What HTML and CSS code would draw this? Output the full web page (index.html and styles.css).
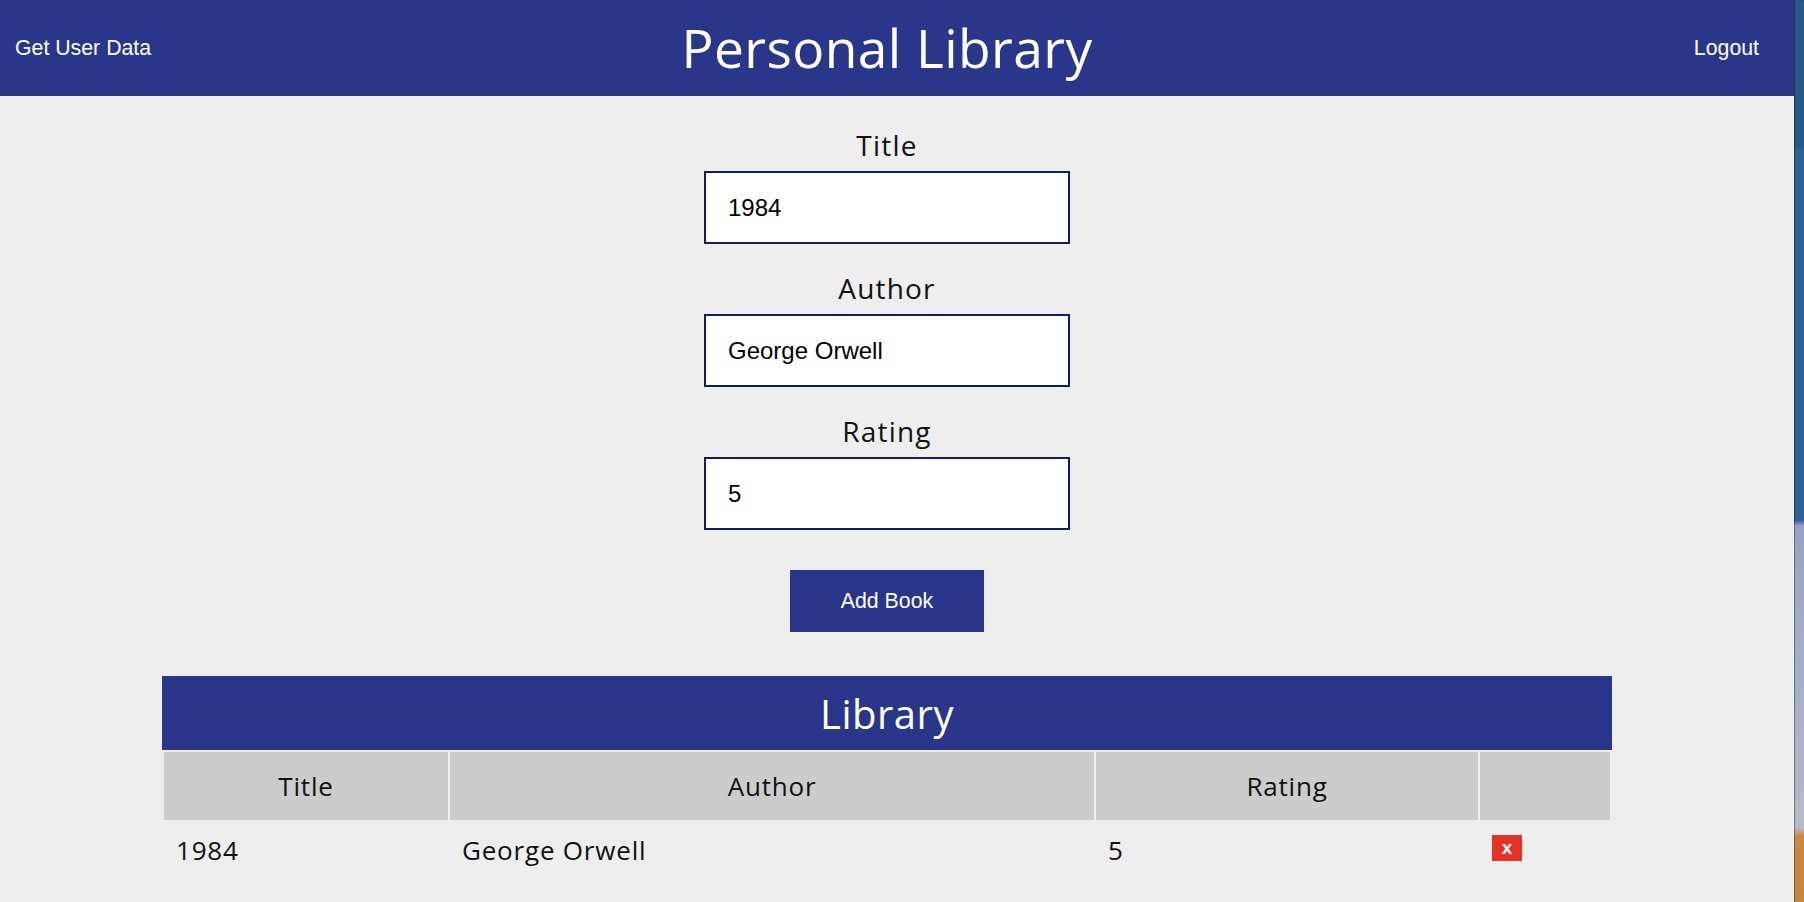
FILE: index.html
```html
<!DOCTYPE html>
<html lang="en">
<head>
<meta charset="utf-8">
<title>Personal Library</title>
<link rel="stylesheet" href="styles.css">
</head>
<body>
<div class="screen">
  <div class="app">
    <header class="topbar">
      <div class="topbar-side"><a class="toplink" href="#">Get User Data</a></div>
      <h1 class="brand">Personal Library</h1>
      <div class="topbar-side topbar-right"><a class="toplink" href="#">Logout</a></div>
    </header>
    <main class="main">
      <form class="book-form">
        <label class="field">
          <span class="field-label">Title</span>
          <input class="field-input" type="text" value="1984">
        </label>
        <label class="field">
          <span class="field-label">Author</span>
          <input class="field-input" type="text" value="George Orwell">
        </label>
        <label class="field">
          <span class="field-label">Rating</span>
          <input class="field-input" type="text" value="5">
        </label>
        <button class="add-btn" type="button">Add Book</button>
      </form>
      <div class="library">
        <div class="library-caption">Library</div>
        <table class="library-table">
          <colgroup>
            <col class="c-title"><col class="c-author"><col class="c-rating"><col class="c-del">
          </colgroup>
          <thead>
            <tr><th>Title</th><th>Author</th><th>Rating</th><th></th></tr>
          </thead>
          <tbody>
            <tr>
              <td>1984</td>
              <td>George Orwell</td>
              <td>5</td>
              <td><button class="del-btn" type="button">x</button></td>
            </tr>
          </tbody>
        </table>
      </div>
    </main>
  </div>
  <div class="desktop"></div>
</div>
</body>
</html>
```
FILE: styles.css
```css
html, body {
  margin: 0;
  padding: 0;
  height: 902px;
  overflow: hidden;
}
body {
  font-family: "Open Sans", "Liberation Sans", sans-serif;
  color: #111;
  background: #eeeeee;
}
.screen {
  display: flex;
  height: 902px;
}
.app {
  flex: 0 0 1794px;
  background: #eeeeee;
  display: flex;
  flex-direction: column;
}
.desktop {
  flex: 1 1 auto;
  box-shadow: inset 1px 0 1px rgba(0,0,0,0.35);
  background: linear-gradient(to bottom,
    #2b5784 0px, #2b5784 146px,
    #2f6292 150px, #2f6292 520px,
    #98a3c6 526px, #b6bbcb 828px,
    #c78a45 836px, #c48845 902px);
}
.topbar {
  height: 96px;
  background: #2a368a;
  display: flex;
  align-items: center;
  padding: 0 35px 0 15px;
  box-sizing: border-box;
}
.topbar-side {
  flex: 1 1 0;
}
.topbar-right {
  text-align: right;
}
.toplink {
  font-family: "Liberation Sans", Arial, sans-serif;
  font-size: 21.3px;
  color: #ffffff;
  text-decoration: none;
}
.brand {
  margin: 0;
  font-family: "Open Sans", sans-serif;
  font-weight: 400;
  font-size: 53.3px;
  line-height: 60px;
  color: #ffffff;
  letter-spacing: 0.4px;
}
.main {
  padding: 32px 20px 0 0;
  display: flex;
  flex-direction: column;
  align-items: center;
}
.book-form {
  display: flex;
  flex-direction: column;
  align-items: center;
}
.field {
  display: flex;
  flex-direction: column;
  align-items: center;
  margin-bottom: 27px;
}
.field-label {
  font-size: 28px;
  line-height: 34px;
  letter-spacing: 1.2px;
  margin-bottom: 9px;
  color: #111;
}
.field-input {
  width: 366px;
  height: 73px;
  box-sizing: border-box;
  border: 2px solid #111d62;
  border-radius: 0;
  background: #ffffff;
  padding: 0 0 0 22px;
  margin: 0;
  font-family: "Liberation Sans", Arial, sans-serif;
  font-size: 24px;
  color: #000;
  outline: none;
}
.add-btn {
  margin-top: 13px;
  width: 194px;
  height: 62px;
  border: none;
  border-radius: 0;
  background: #2a368a;
  color: #ffffff;
  font-family: "Liberation Sans", Arial, sans-serif;
  font-size: 21.3px;
  cursor: pointer;
}
.library {
  margin-top: 44px;
  width: 1450px;
}
.library-caption {
  height: 74px;
  background: #2a368a;
  color: #ffffff;
  font-size: 40px;
  display: flex;
  align-items: center;
  justify-content: center;
  letter-spacing: 0.5px;
}
.library-table {
  width: 1450px;
  table-layout: fixed;
  border-collapse: separate;
  border-spacing: 2px;
}
.c-title { width: 284px; }
.c-author { width: 644px; }
.c-rating { width: 382px; }
.c-del { width: 130px; }
.library-table th {
  height: 68px;
  padding: 0;
  background: #cccccc;
  font-weight: 400;
  font-size: 26px;
  letter-spacing: 0.8px;
  text-align: center;
  vertical-align: middle;
  color: #111;
}
.library-table td {
  padding: 11px 12px 12px;
  font-size: 26px;
  line-height: 34px;
  letter-spacing: 0.8px;
  vertical-align: top;
  text-align: left;
  color: #111;
}
.del-btn {
  display: block;
  margin-top: 2px;
  width: 30px;
  height: 26px;
  padding: 0;
  border: none;
  border-radius: 0;
  background: #e43226;
  color: #ffffff;
  font-family: "Liberation Sans", Arial, sans-serif;
  font-weight: 700;
  font-size: 19px;
  line-height: 26px;
  text-align: center;
  cursor: pointer;
}
```
